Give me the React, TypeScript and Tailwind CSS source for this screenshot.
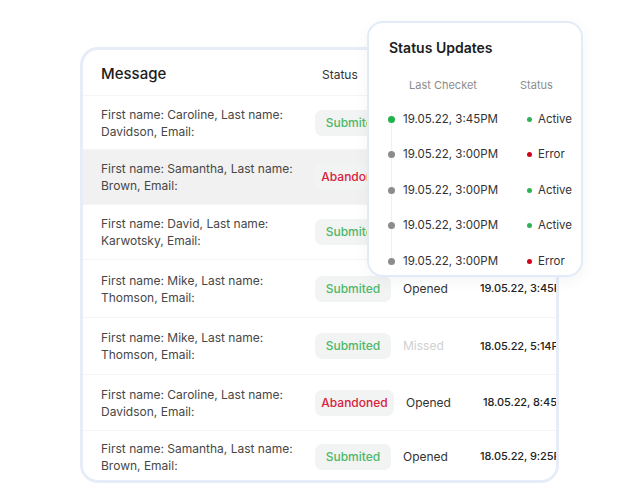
const rows = [
  { first: 'Caroline', last: 'Davidson', status: 'Submited', seen: 'Opened', date: '19.05.22, 3:45PM', h: 'h-[54px]', shade: false },
  { first: 'Samantha', last: 'Brown', status: 'Abandoned', seen: 'Opened', date: '19.05.22, 3:45PM', h: 'h-[55px]', shade: true },
  { first: 'David', last: 'Karwotsky', status: 'Submited', seen: 'Opened', date: '19.05.22, 3:45PM', h: 'h-[55px]', shade: false },
  { first: 'Mike', last: 'Thomson', status: 'Submited', seen: 'Opened', date: '19.05.22, 3:45PM', h: 'h-[58px]', shade: false },
  { first: 'Mike', last: 'Thomson', status: 'Submited', seen: 'Missed', date: '18.05.22, 5:14PM', h: 'h-[57px]', shade: false },
  { first: 'Caroline', last: 'Davidson', status: 'Abandoned', seen: 'Opened', date: '18.05.22, 8:45PM', h: 'h-[56px]', shade: false },
  { first: 'Samantha', last: 'Brown', status: 'Submited', seen: 'Opened', date: '18.05.22, 9:25PM', h: 'h-[52px]', shade: false },
]

const updates = [
  { date: '19.05.22, 3:45PM', status: 'Active', latest: true },
  { date: '19.05.22, 3:00PM', status: 'Error', latest: false },
  { date: '19.05.22, 3:00PM', status: 'Active', latest: false },
  { date: '19.05.22, 3:00PM', status: 'Active', latest: false },
  { date: '19.05.22, 3:00PM', status: 'Error', latest: false },
]

export default function App() {
  return (
    <div className="relative w-[618px] h-[500px] bg-white font-['Inter',sans-serif] overflow-hidden">
      {/* messages table */}
      <div className="ml-[80px] mt-[47px] w-[479px] h-[436px] rounded-[18px] border-[3px] border-[#e7edf8] bg-white overflow-hidden">
        <div className="flex items-center h-[45px] pt-[4px] pl-[18px]">
          <span className="w-[221px] text-[15px] font-medium text-[#1c1c1c]">Message</span>
          <span className="text-[12px] text-[#333]">Status</span>
        </div>
        {rows.map((r, i) => (
          <div
            key={i}
            className={`flex items-center pl-[18px] border-t border-[#f4f4f4] ${r.h} ${r.shade ? 'bg-[#f1f1f1]' : 'bg-white'}`}
          >
            <p className="w-[214px] shrink-0 text-[12px] leading-[17px] text-[#474747]">
              First name: {r.first}, Last name: {r.last}, Email:
            </p>
            <span
              className={`shrink-0 rounded-[7px] bg-[#f2f3f3] h-[26px] flex items-center justify-center text-[12px] font-medium ${
                r.status === 'Submited' ? 'w-[76px] text-[#4cb86a]' : 'w-[79px] text-[#d7213f]'
              }`}
            >
              {r.status}
            </span>
            <span className={`shrink-0 ml-[12px] w-[77px] text-[12px] ${r.seen === 'Missed' ? 'text-[#d0d0d0]' : 'text-[#333]'}`}>
              {r.seen}
            </span>
            <span className="shrink-0 whitespace-nowrap text-[11px] font-medium tracking-[-0.1px] text-[#222]">{r.date}</span>
          </div>
        ))}
      </div>

      {/* status updates overlay */}
      <div className="absolute left-[367px] top-[21px] w-[216px] h-[256px] rounded-[16px] border-[2px] border-[#e3ebf8] bg-white shadow-[0_4px_14px_rgba(60,80,120,0.06)]">
        <h2 className="pl-[20px] pt-[14px] text-[14px] font-semibold text-[#1c1c1c]">Status Updates</h2>
        <div className="flex mt-[19px] text-[11px] text-[#8c8c8c]">
          <span className="pl-[40px] w-[151px]">Last Checket</span>
          <span>Status</span>
        </div>
        <div className="relative mt-[8px]">
          <div className="absolute left-[22px] top-[10px] h-[150px] w-px bg-[#f0f0f0]" />
          {updates.map((u, i) => (
            <div key={i} className="relative flex items-center h-[35.5px] text-[11.5px] text-[#333]">
              <span className={`ml-[19px] w-[7px] h-[7px] rounded-full ${u.latest ? 'bg-[#22b24c]' : 'bg-[#8c8c8c]'}`} />
              <span className="ml-[8px] w-[124px]">{u.date}</span>
              <span className={`w-[5px] h-[5px] rounded-full ${u.status === 'Active' ? 'bg-[#2db356]' : 'bg-[#d0021b]'}`} />
              <span className="ml-[6px]">{u.status}</span>
            </div>
          ))}
        </div>
      </div>
    </div>
  )
}
